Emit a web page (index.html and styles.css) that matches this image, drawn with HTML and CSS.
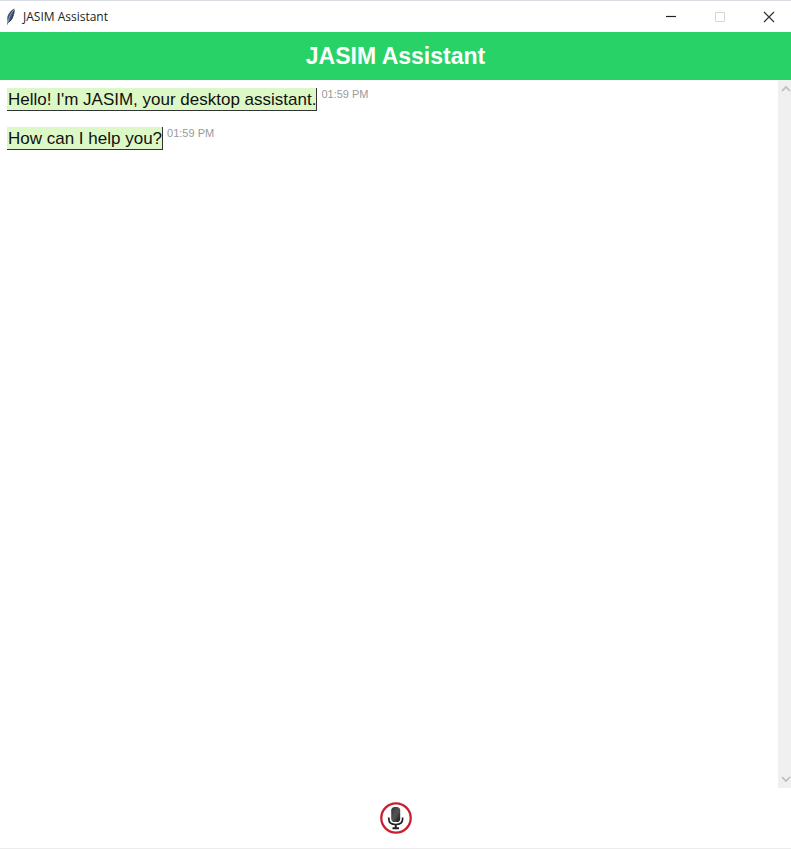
FILE: index.html
```html
<!DOCTYPE html>
<html lang="en">
<head>
<meta charset="utf-8">
<meta name="viewport" content="width=device-width, initial-scale=1">
<title>JASIM Assistant</title>
<link rel="stylesheet" href="styles.css">
</head>
<body>
<div class="window">
  <div class="titlebar">
    <svg class="feather" viewBox="0 0 12 18" aria-hidden="true">
      <path d="M9.500 .5C6 2 3 5.500 2.200 10L2.500 13.500L2 17.500L3.500 14.500C7.500 12.500 9 7 9.500 .5Z" fill="#3d5272"/>
      <path d="M8.800 2C6 5 4 9 2.800 15" fill="none" stroke="#8ea3c0" stroke-width="1"/>
      <path d="M3.600 14.200C6.500 12.800 8.500 8 9.300 2.500" fill="none" stroke="#26344c" stroke-width="1"/>
    </svg>
    <span class="caption">JASIM Assistant</span>
    <div class="controls">
      <button class="control" type="button" aria-label="Minimize">
        <svg viewBox="0 0 12 12"><path d="M1 5.500H11" stroke="#222" stroke-width="1.200"/></svg>
      </button>
      <button class="control" type="button" aria-label="Maximize" disabled>
        <svg viewBox="0 0 12 12"><path d="M1.500 1.500H10.500V10.500H1.500Z" fill="none" stroke="#d6d6d6"/></svg>
      </button>
      <button class="control" type="button" aria-label="Close">
        <svg viewBox="0 0 12 12"><path d="M1 1L11 11M11 1L1 11" stroke="#333" stroke-width="1.200"/></svg>
      </button>
    </div>
  </div>
  <header class="banner"><h1>JASIM Assistant</h1></header>
  <main class="chat">
    <div class="messages">
      <div class="message"><p class="bubble">Hello! I'm JASIM, your desktop assistant.</p><time class="time">01:59 PM</time></div>
      <div class="message"><p class="bubble">How can I help you?</p><time class="time">01:59 PM</time></div>
    </div>
    <div class="scrollbar">
      <button class="arrow" type="button" aria-label="Scroll up">
        <svg viewBox="0 0 10 8"><path d="M1 6L5 2L9 6" fill="none" stroke="#bcbcbc" stroke-width="1.700"/></svg>
      </button>
      <button class="arrow" type="button" aria-label="Scroll down">
        <svg viewBox="0 0 10 8"><path d="M1 2L5 6L9 2" fill="none" stroke="#bcbcbc" stroke-width="1.700"/></svg>
      </button>
    </div>
  </main>
  <footer class="footer">
    <button class="mic" type="button" aria-label="Speak">
      <svg viewBox="0 0 32 32">
        <defs><linearGradient id="body" x2="1" y2="1"><stop offset="0" stop-color="#333"/><stop offset=".5" stop-color="#555"/><stop offset="1" stop-color="#181818"/></linearGradient></defs>
        <circle cx="16" cy="16" r="14.700" fill="#fff" stroke="#c8202f" stroke-width="2.300"/>
        <rect x="11.200" y="5" width="9" height="15" rx="3.600" fill="url(#body)"/>
        <path d="M8.800 15.500V17C8.800 20.500 11.500 22.500 15.700 22.500S22.600 20.500 22.600 17V15.500" fill="none" stroke="#222" stroke-width="1.700"/>
        <path d="M15.700 22V27M12.500 26.300H19" fill="none" stroke="#222" stroke-width="2"/>
      </svg>
    </button>
  </footer>
</div>
</body>
</html>
```
FILE: styles.css
```css
* {
  box-sizing: border-box;
}

body {
  margin: 0;
  background: #fff;
  color: #111;
  font-family: "Liberation Sans", Arial, sans-serif;
}

h1,
p {
  margin: 0;
}

button {
  display: flex;
  align-items: center;
  justify-content: center;
  padding: 0;
  border: 0;
  background: none;
}

.window {
  display: flex;
  flex-direction: column;
  min-height: 100vh;
  border-top: 1px solid #d9dce2;
  border-bottom: 1px solid #ececec;
}

.titlebar {
  display: flex;
  align-items: center;
  height: 31px;
  padding-left: 5px;
}

.feather {
  width: 12px;
  height: 18px;
}

.caption {
  margin-left: 6px;
  color: #222;
  font: 12px/16px "Segoe UI", "Open Sans", sans-serif;
}

.controls {
  display: flex;
  gap: 5px;
  align-self: stretch;
  margin-left: auto;
}

.control {
  width: 44px;
}

.control svg {
  width: 12px;
  height: 12px;
}

.banner {
  padding: 10px;
  background: #27d367;
  color: #fff;
  text-align: center;
}

.banner h1 {
  font-size: 23px;
  line-height: 28px;
}

.chat {
  display: flex;
  flex: 1;
}

.messages {
  display: flex;
  flex: 1;
  flex-direction: column;
  gap: 16px;
  padding: 8px 7px;
}

.message {
  display: flex;
  align-items: flex-start;
  gap: 4px;
}

.bubble {
  padding: 2px 0 0 1px;
  border-right: 1px solid #333;
  border-bottom: 1px solid #333;
  background: #dcf8c6;
  font-size: 17px;
  line-height: 20px;
}

.time {
  color: #999;
  font-size: 11px;
  line-height: 12px;
}

.scrollbar {
  display: flex;
  flex-direction: column;
  justify-content: space-between;
  width: 13px;
  background: #f0f0f0;
}

.arrow {
  height: 18px;
  padding-left: 2px;
}

.arrow svg {
  width: 10px;
  height: 8px;
}

.footer {
  display: flex;
  justify-content: center;
  padding: 14px 0;
}

.mic {
  border-radius: 50%;
}

.mic svg {
  width: 32px;
  height: 32px;
}
```
